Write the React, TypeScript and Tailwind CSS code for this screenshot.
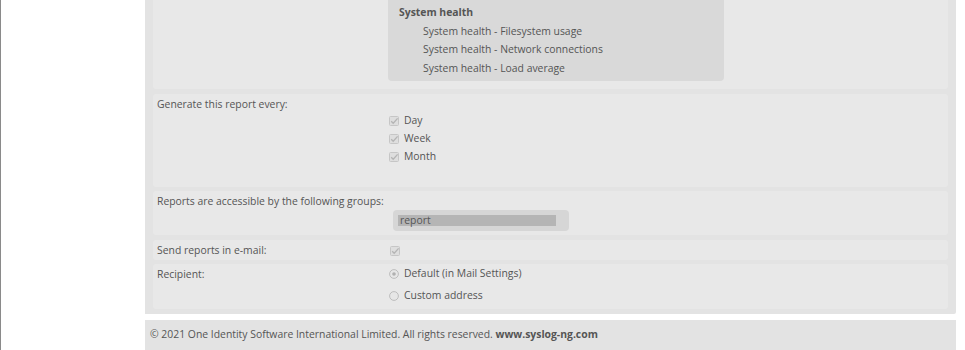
import React from "react";

const font = { fontFamily: '"Open Sans", "Liberation Sans", sans-serif' };

function Check() {
  return (
    <svg width="10" height="10" viewBox="0 0 10 10" className="shrink-0">
      <rect x="0.5" y="0.5" width="9" height="9" rx="1" fill="#dedede" stroke="#c6c6c6" />
      <path d="M2.2 5.2 L4.2 7.2 L8.6 2.4" fill="none" stroke="#b4b4b4" strokeWidth="1.3" />
    </svg>
  );
}

function Radio({ on }: { on?: boolean }) {
  return (
    <svg width="10" height="10" viewBox="0 0 10 10" className="shrink-0">
      <circle cx="5" cy="5" r="4.4" fill="#e6e6e6" stroke="#b8b8b8" strokeWidth="0.9" />
      {on && <circle cx="5" cy="5" r="1.8" fill="#b0b0b0" />}
    </svg>
  );
}

export default function App() {
  return (
    <div className="w-[965px] h-[350px] overflow-hidden bg-white flex text-[10.4px] text-[#555]" style={font}>
      <div className="w-px h-full bg-[#8a8a8a]" />
      <div className="w-[144px]" />
      <div className="w-[811px] flex flex-col">
        <div className="bg-[#e3e3e3] px-2 pb-[5px] rounded-br-[2px] flex flex-col">
          {/* Row 1 */}
          <div className="bg-[#e8e8e8] h-[89px] rounded-b-[3px] flex">
            <div className="w-[235px]" />
            <div className="w-[336px] h-[81px] bg-[#d9d9d9] rounded-b-[4px] pl-[11px] pt-[4px] flex flex-col">
              <div className="font-bold h-[17px] leading-[17px]">System health</div>
              <div className="pl-[24px] pt-[1px] flex flex-col">
                <div className="h-[18px] leading-[18px]">System health - Filesystem usage</div>
                <div className="h-[19px] leading-[19px]">System health - Network connections</div>
                <div className="h-[18px] leading-[18px]">System health - Load average</div>
              </div>
            </div>
          </div>
          {/* Row 2 */}
          <div className="mt-[5px] bg-[#e8e8e8] h-[93px] rounded-[3px] flex flex-col pt-[2px]">
            <div className="pl-[4px] h-[16px] leading-[16px]">Generate this report every:</div>
            <div className="pl-[236px] flex flex-col">
              {["Day", "Week", "Month"].map((t) => (
                <div key={t} className="h-[18px] flex items-center gap-[5px]">
                  <Check />
                  <span>{t}</span>
                </div>
              ))}
            </div>
          </div>
          {/* Row 3 */}
          <div className="mt-[4px] bg-[#e8e8e8] h-[44px] rounded-[3px] flex flex-col pt-[2px]">
            <div className="pl-[4px] h-[16px] leading-[16px]">Reports are accessible by the following groups:</div>
            <div className="pl-[240px] pt-[1px]">
              <div className="w-[176px] h-[21px] bg-[#d6d6d6] rounded-[4px] px-[5px] pt-[5px]">
                <div className="w-[158px] h-[11px] bg-[#b5b5b5] leading-[11px] pl-[2px]">report</div>
              </div>
            </div>
          </div>
          {/* Row 4 */}
          <div className="mt-[5px] bg-[#e8e8e8] h-[20px] rounded-[3px] flex items-center pt-[1px]">
            <div className="pl-[4px] w-[237px]">Send reports in e-mail:</div>
            <Check />
          </div>
          {/* Row 5 */}
          <div className="mt-[4px] bg-[#e8e8e8] h-[45px] rounded-[3px] flex pt-[2px]">
            <div className="pl-[4px] w-[236px] h-[16px] leading-[16px]">Recipient:</div>
            <div className="flex flex-col">
              <div className="h-[16px] flex items-center gap-[5px]">
                <Radio on />
                <span>Default (in Mail Settings)</span>
              </div>
              <div className="h-[6px]" />
              <div className="h-[16px] flex items-center gap-[5px]">
                <Radio />
                <span>Custom address</span>
              </div>
            </div>
          </div>
        </div>
        <div className="h-[9px]" />
        <div className="bg-[#e3e3e3] h-[40px] pl-[5px] pt-[6px] leading-[16px]">
          © 2021 One Identity Software International Limited. All rights reserved.{" "}
          <span className="font-bold">www.syslog-ng.com</span>
        </div>
      </div>
    </div>
  );
}
